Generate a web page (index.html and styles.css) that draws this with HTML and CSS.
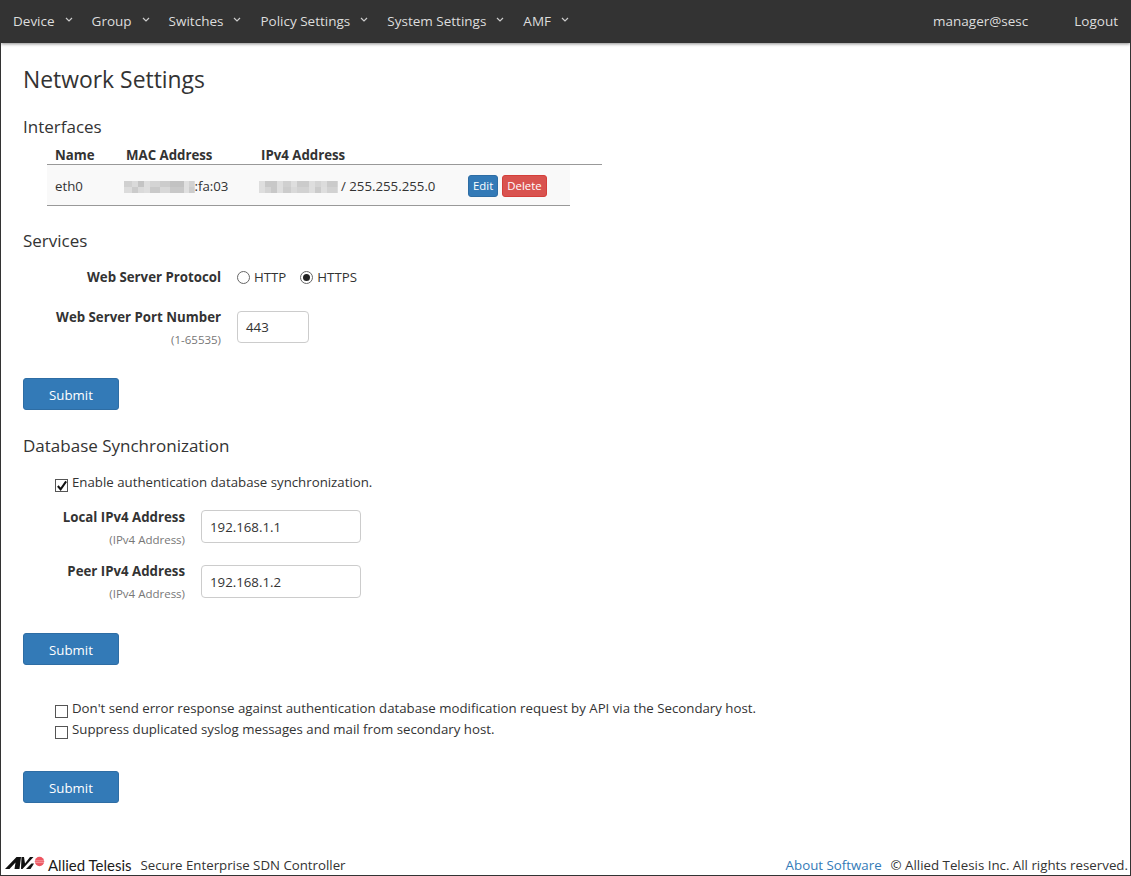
FILE: index.html
```html
<!DOCTYPE html>
<html lang="en">
<head>
<meta charset="utf-8">
<title>Network Settings</title>
<link rel="stylesheet" href="styles.css">
</head>
<body>
<div class="window">
  <nav class="navbar">
    <ul class="menu">
      <li>Device<svg class="caret" viewBox="0 0 8 5"><path d="M1 1l3 3 3-3"/></svg></li>
      <li>Group<svg class="caret" viewBox="0 0 8 5"><path d="M1 1l3 3 3-3"/></svg></li>
      <li>Switches<svg class="caret" viewBox="0 0 8 5"><path d="M1 1l3 3 3-3"/></svg></li>
      <li>Policy Settings<svg class="caret" viewBox="0 0 8 5"><path d="M1 1l3 3 3-3"/></svg></li>
      <li>System Settings<svg class="caret" viewBox="0 0 8 5"><path d="M1 1l3 3 3-3"/></svg></li>
      <li>AMF<svg class="caret" viewBox="0 0 8 5"><path d="M1 1l3 3 3-3"/></svg></li>
    </ul>
    <div class="nav-right">
      <span class="user">manager@sesc</span>
      <span>Logout</span>
    </div>
  </nav>

  <main class="content">
    <h1>Network Settings</h1>

    <h3 class="first">Interfaces</h3>
    <div class="if-head">
      <span class="col-name">Name</span>
      <span class="col-mac">MAC Address</span>
      <span>IPv4 Address</span>
    </div>
    <div class="if-row">
      <span class="col-name">eth0</span>
      <span class="col-mac"><span class="blur blur-mac"></span>:fa:03</span>
      <span class="col-ip"><span class="blur blur-ip"></span> / 255.255.255.0</span>
      <span class="actions">
        <button class="btn-xs blue">Edit</button>
        <button class="btn-xs red">Delete</button>
      </span>
    </div>

    <h3 class="services">Services</h3>
    <div class="field proto">
      <div class="label wide"><b>Web Server Protocol</b></div>
      <div class="radios">
        <label class="radio"><span class="rd"></span>HTTP</label>
        <label class="radio"><span class="rd on"></span>HTTPS</label>
      </div>
    </div>
    <div class="field port">
      <div class="label wide"><b>Web Server Port Number</b><small>(1-65535)</small></div>
      <div class="input small-input">443</div>
    </div>
    <button class="submit s1">Submit</button>

    <h3 class="db">Database Synchronization</h3>
    <label class="check c-enable"><span class="cb on"><svg viewBox="0 0 13 13"><path d="M2 6.500l3 3.500 6-8.500"/></svg></span>Enable authentication database synchronization.</label>
    <div class="field local">
      <div class="label narrow"><b>Local IPv4 Address</b><small>(IPv4 Address)</small></div>
      <div class="input big-input">192.168.1.1</div>
    </div>
    <div class="field peer">
      <div class="label narrow"><b>Peer IPv4 Address</b><small>(IPv4 Address)</small></div>
      <div class="input big-input">192.168.1.2</div>
    </div>
    <button class="submit s2">Submit</button>

    <label class="check c-api"><span class="cb"></span>Don't send error response against authentication database modification request by API via the Secondary host.</label>
    <label class="check c-sys"><span class="cb"></span>Suppress duplicated syslog messages and mail from secondary host.</label>
    <button class="submit s3">Submit</button>
  </main>

  <footer class="footer">
    <div class="brand">
      <svg class="logo" viewBox="0 0 42 13"><path class="k" d="M1 13L12.500 1H17l-1.500 12h-5l1-6.500L5.500 13z"/><path class="k" d="M17.500 1h2.500l1 6.500L26 1h3.500L18.500 13H17z"/><path class="k" d="M22 13l5.500-5.500h2.500L26.500 13z"/><circle class="r" cx="35.500" cy="5.500" r="4.700"/><path class="w" d="M30 4.800h11M30 6.600h11"/></svg>
      <span class="allied">Allied Telesis</span>
      <span class="product">Secure Enterprise SDN Controller</span>
    </div>
    <div class="legal"><span class="link">About Software</span>&nbsp; © Allied Telesis Inc. All rights reserved.</div>
  </footer>
</div>
</body>
</html>
```
FILE: styles.css
```css
* { box-sizing: border-box; }
html, body { margin: 0; padding: 0; }
body {
  font-family: "Open Sans", "Noto Sans", sans-serif;
  font-size: 13.25px;
  line-height: 20px;
  color: #333;
  background: #fff;
}
.window {
  width: 1131px;
  height: 876px;
  border: 1px solid #333;
  display: flex;
  flex-direction: column;
  overflow: hidden;
}
.navbar {
  height: 42px;
  flex: none;
  background: #333;
  color: #ddd;
  display: flex;
  justify-content: space-between;
  align-items: center;
  padding: 0 12px 2px;
  box-shadow: 0 1px 3px rgba(0,0,0,.45);
  font-size: 13.5px;
}
.menu {
  list-style: none;
  display: flex;
  margin: 0;
  padding: 0;
}
.menu li { display: flex; align-items: center; margin-right: 19px; }
.caret { width: 8px; height: 5px; margin-left: 10px; margin-top: -3px; fill: none; stroke: #ccc; stroke-width: 1.2; }
.nav-right { display: flex; }
.user { margin-right: 46px; }

.content { flex: 1; padding: 0 22px; }
h1 { font-size: 22.9px; font-weight: 400; line-height: 30px; margin: 22px 0 0; }
h3 { font-size: 17px; font-weight: 400; line-height: 22px; margin: 0; }
h3.first { margin-top: 21px; }

.if-head {
  display: flex;
  width: 555px;
  margin-left: 24px;
  height: 22px;
  padding: 2px 0 0 8px;
  border-bottom: 1px solid #999;
  font-weight: 700;
  align-items: center;
  margin-top: 5px;
}
.if-row {
  display: flex;
  align-items: center;
  width: 523px;
  height: 41px;
  margin-left: 24px;
  padding: 2px 0 0 8px;
  background: #f9f9f9;
  border-bottom: 1px solid #999;
}
.col-name { width: 71px; }
.col-mac { width: 135px; }
.col-ip { width: 207px; }
.blur {
  display: inline-block;
  height: 12px;
  margin-left: -2px;
  vertical-align: -2px;
  background-repeat: no-repeat;
  background-size: 100% 50%;
  background-position: top, bottom;
  filter: blur(.5px);
}
.blur-mac {
  width: 70.5px;
  background-image:
    linear-gradient(90deg, #d0d0d0 0 8px, #dadada 8px 14px, #c4c4c4 14px 20px, #dedede 20px 26px, #d4d4d4 26px 36px, #cccccc 36px 46px, #c2c2c2 46px 60px, #e0e0e0 60px 65px, #d2d2d2 65px),
    linear-gradient(90deg, #dcdcdc 0 8px, #cbcbcb 8px 14px, #dadada 14px 20px, #dedede 20px 26px, #c9c9c9 26px 36px, #d8d8d8 36px 46px, #c8c8c8 46px 60px, #e0e0e0 60px 65px, #cccccc 65px);
}
.blur-ip {
  width: 78.5px;
  background-image:
    linear-gradient(90deg, #dedede 0 6px, #c8c8c8 6px 18px, #dedede 18px 24px, #d0d0d0 24px 32px, #dedede 32px 38px, #cbcbcb 38px 50px, #dedede 50px 56px, #d4d4d4 56px 62px, #dcdcdc 62px 68px, #cbcbcb 68px),
    linear-gradient(90deg, #dedede 0 6px, #d4d4d4 6px 12px, #c8c8c8 12px 18px, #dedede 18px 24px, #cccccc 24px 32px, #d9d9d9 32px 38px, #d2d2d2 38px 50px, #dedede 50px 56px, #cbcbcb 56px 62px, #dedede 62px 68px, #d2d2d2 68px);
}
.actions { display: flex; gap: 4px; }
.btn-xs {
  font: inherit;
  font-size: 11.4px;
  line-height: 18px;
  height: 22px;
  padding: 0 4px;
  color: #fff;
  border-radius: 3px;
  border: 1px solid;
}
.blue { background: #337ab7; border-color: #2e6da4; }
.red { background: #d9534f; border-color: #d43f3a; }

h3.services { margin-top: 24px; }
.field { display: flex; }
.label { text-align: right; }
.label b, .label small { display: block; }
.label b { margin-top: -3px; }
.label small { font-size: 11.5px; color: #777; line-height: 16px; margin-top: 5px; }
.wide { width: 198px; margin-right: 16px; }
.narrow { width: 162px; margin-right: 16px; }
.proto { margin-top: 15px; height: 20px; align-items: center; }
.proto .label b { margin-top: 0; }
.radios { display: flex; gap: 14px; }
.radio { display: flex; align-items: center; }
.rd {
  width: 13px; height: 13px; border-radius: 50%;
  border: 1px solid #666; background: #fff; margin-right: 4px;
  display: flex; align-items: center; justify-content: center;
}
.rd.on::after { content: ""; width: 7px; height: 7px; border-radius: 50%; background: #222; }
.port { margin-top: 24px; align-items: flex-start; }
.port .label b { margin-top: -4px; }
.peer .label b { margin-top: -4px; }
.input {
  border: 1px solid #ccc;
  border-radius: 4px;
  padding: 0 8px;
  display: flex;
  align-items: center;
  background: #fff;
}
.small-input { width: 72px; height: 32px; }
.big-input { width: 160px; height: 33px; }

.submit {
  display: block;
  font: inherit;
  width: 96px;
  height: 32px;
  padding: 2px 0 0;
  background: #337ab7;
  border: 1px solid #2e6da4;
  border-radius: 3px;
  color: #fff;
}
.s1 { margin-top: 30px; }
h3.db { margin-top: 25px; }
.check { display: flex; align-items: flex-start; margin-left: 32px; }
.cb {
  width: 13px; height: 13px; border: 1px solid #555; background: #fff;
  margin: 7px 4px 0 0; flex: none; display: block;
}
.cb svg { display: block; width: 12px; height: 12px; overflow: visible; fill: none; stroke: #111; stroke-width: 2.2; }
.c-enable { margin-top: 15px; }
.local { margin-top: 18px; }
.peer { margin-top: 17px; }
.s2 { margin-top: 31px; }
.c-api { margin-top: 33px; }
.c-sys { margin-top: 1px; }
.s3 { margin-top: 32px; }

.footer {
  flex: none;
  height: 20px;
  display: flex;
  justify-content: space-between;
  align-items: flex-end;
  padding: 0 2px 0 3px;
}
.brand { display: flex; align-items: flex-end; }
.logo { width: 42px; height: 13px; margin-bottom: 6px; }
.k { fill: #111; }
.r { fill: #ee5560; }
.w { stroke: #fff; stroke-width: .4; }
.allied { font-family: "Lato", sans-serif; font-size: 15px; margin-left: 2px; color: #1a1a1a; }
.product { margin-left: 9px; }
.legal { font-size: 13.3px; }
.link { color: #337ab7; margin-right: 2px; }
```
